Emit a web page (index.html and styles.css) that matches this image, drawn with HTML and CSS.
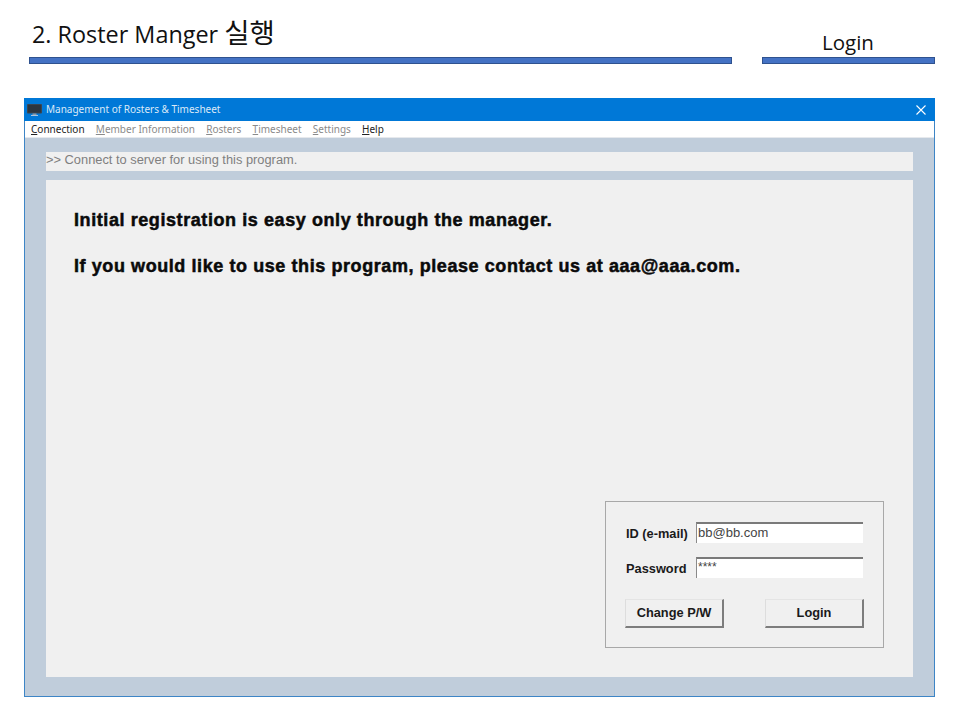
FILE: index.html
```html
<!DOCTYPE html>
<html lang="ko">
<head>
<meta charset="utf-8">
<title>Roster Manger</title>
<link rel="stylesheet" href="styles.css">
</head>
<body>
<header class="slide-head">
  <div class="head-left"><h1 class="slide-title">2. Roster Manger <span class="ko">실행</span></h1></div>
  <div class="head-right"><div class="slide-sub">Login</div></div>
</header>
<section class="window">
  <div class="titlebar">
    <svg class="app-icon" width="15" height="12" viewBox="0 0 15 12"><rect x="0" y="0" width="15" height="9.5" rx="1" fill="#3a4652"/><rect x="1" y="1" width="13" height="7.5" fill="#2c3640"/><rect x="5.5" y="9.5" width="4" height="1.5" fill="#8b98a5"/><rect x="4" y="11" width="7" height="1" fill="#a9c4de"/></svg>
    <span class="window-title">Management of Rosters &amp; Timesheet</span>
    <svg class="close" width="10" height="10" viewBox="0 0 10 10"><path d="M0.5 0.5L9.5 9.5M9.5 0.5L0.5 9.5" stroke="#fff" stroke-width="1.1" fill="none"/></svg>
  </div>
  <nav class="menubar">
    <span class="menu on"><u>C</u>onnection</span>
    <span class="menu"><u>M</u>ember Information</span>
    <span class="menu"><u>R</u>osters</span>
    <span class="menu"><u>T</u>imesheet</span>
    <span class="menu"><u>S</u>ettings</span>
    <span class="menu on"><u>H</u>elp</span>
  </nav>
  <div class="client">
    <div class="status">&gt;&gt; Connect to server for using this program.</div>
    <main class="panel">
      <p class="notice">Initial registration is easy only through the manager.</p>
      <p class="notice second">If you would like to use this program, please contact us at aaa@aaa.com.</p>
      <form class="login">
        <div class="field"><label class="lbl">ID (e-mail)</label><div class="input">bb@bb.com</div></div>
        <div class="field"><label class="lbl">Password</label><div class="input pw">****</div></div>
        <div class="actions"><div class="btn">Change P/W</div><div class="btn">Login</div></div>
      </form>
    </main>
  </div>
</section>
</body>
</html>
```
FILE: styles.css
```css
* { box-sizing: border-box; }
html, body { margin: 0; padding: 0; }
body { width: 960px; height: 720px; background: #fff; overflow: hidden; font-family: "Liberation Sans", Arial, sans-serif; }

.slide-head { display: flex; height: 65px; padding-left: 29px; }
.head-left { width: 703px; display: flex; flex-direction: column; justify-content: flex-end; }
.head-right { width: 173px; margin-left: 30px; display: flex; flex-direction: column; justify-content: flex-end; }
.slide-title { margin: 0 0 7px; padding-left: 3px; font: 400 23.4px/32px "Open Sans", "Noto Sans CJK KR", sans-serif; color: #111; white-space: nowrap; }
.ko { font: 400 27.5px/32px "Noto Sans CJK KR", sans-serif; }
.slide-sub { margin: 0 0 1px; padding-left: 60px; font: 400 20.5px/28px "Open Sans", sans-serif; color: #111; }
.head-left::after, .head-right::after { content: ""; flex: none; display: block; height: 5px; background: #4472c4; border: 1px solid #2f528f; margin-bottom: 1px; }

.window { width: 911px; height: 599px; margin: 33px 0 0 24px; border: 1px solid #3d85c6; border-top: 0; display: flex; flex-direction: column; background: #c0cddb; }
.titlebar { flex: none; height: 23px; background: #0078d7; margin: 0 -1px; padding: 0 9px 0 3px; display: flex; align-items: center; gap: 4px; color: #dbe9f7; }
.app-icon { flex: none; }
.window-title { flex: 1; font: 400 10px/14px "Noto Sans", sans-serif; margin-top: -2px; }
.close { flex: none; }
.menubar { flex: none; height: 17px; background: #fff; display: flex; gap: 11.2px; padding-left: 6px; align-items: center; border-bottom: 1px solid #e6e9ed; }
.menu { font: 400 10px/14px "Noto Sans", sans-serif; color: #8a8a8a; white-space: nowrap; }
.menu.on { color: #222; }

.client { flex: 1; display: flex; flex-direction: column; padding: 14px 21px 19px 21px; gap: 9px; min-height: 0; }
.status { flex: none; height: 19px; background: #f0f0f0; font-size: 12.85px; line-height: 16px; color: #7f7f7f; }
.panel { flex: 1; background: #f0f0f0; display: flex; flex-direction: column; padding: 30px 29px 29px 28px; min-height: 0; }
.notice { margin: 0; font-size: 18px; font-weight: 700; line-height: 20px; color: #0a0a0a; letter-spacing: 0.58px; -webkit-text-stroke: 0.5px #0a0a0a; white-space: nowrap; }
.second { margin-top: 26px; }

.login { margin-top: auto; align-self: flex-end; width: 279px; height: 147px; border: 1px solid #a8a8a8; padding: 20px 20px 0; display: flex; flex-direction: column; }
.field { display: flex; align-items: center; height: 21px; margin-bottom: 14px; }
.lbl { width: 70px; padding-top: 1px; font-size: 12.8px; font-weight: 700; color: #1a1a1a; white-space: nowrap; }
.input { width: 167px; height: 21px; background: #fff; border-top: 2px solid #7a7a7a; border-left: 1px solid #8a8a8a; font-size: 13px; line-height: 17px; color: #444; padding-left: 1px; }
.pw { line-height: 17px; font-size: 12px; }
.actions { display: flex; justify-content: space-between; margin: 7px 0 0 -1px; width: 239px; }
.btn { width: 99px; height: 29px; background: #f0f0f0; border-top: 1px solid #e4e4e4; border-left: 1px solid #ddd; border-right: 2px solid #7d7d7d; border-bottom: 2px solid #7d7d7d; font-size: 12.8px; font-weight: 700; color: #1a1a1a; text-align: center; line-height: 26px; }
```
